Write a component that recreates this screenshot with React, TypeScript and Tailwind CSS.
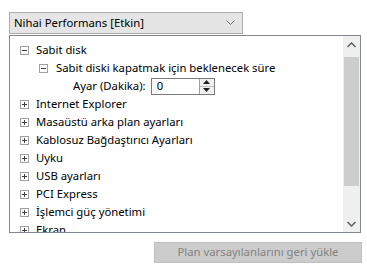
import React from "react";

const font = { fontFamily: '"Noto Sans", "Segoe UI", sans-serif' };

function Box({ open }: { open: boolean }) {
  return (
    <svg width="9" height="9" viewBox="0 0 9 9" className="shrink-0">
      <rect x="0.5" y="0.5" width="8" height="8" fill="#fff" stroke="#a0a0a0" />
      <line x1="2" y1="4.5" x2="7" y2="4.5" stroke="#404040" />
      {!open && <line x1="4.5" y1="2" x2="4.5" y2="7" stroke="#404040" />}
    </svg>
  );
}

function Row({ label, open = false, level = 0 }: { label: string; open?: boolean; level?: number }) {
  return (
    <div className={`flex h-[18px] items-center ${level === 0 ? "pl-[10px]" : "pl-[29px]"}`}>
      <Box open={open} />
      <span className={`${level === 0 ? "ml-[7px]" : "ml-[8px]"} whitespace-nowrap`}>{label}</span>
    </div>
  );
}

export default function App() {
  return (
    <div className="w-[367px] h-[270px] bg-white pl-[9px] pt-[12px] text-[11.3px] text-[#000]" style={font}>
      <div className="w-[234px] h-[22px] border border-[#adadad] bg-[#e5e5e5] flex items-center pl-[4px] pr-[4px]">
        <span className="flex-1 leading-none">Nihai Performans [Etkin]</span>
        <svg width="9" height="6" viewBox="0 0 9 6" className="mr-[3px]">
          <path d="M0.5 0.5 L4.5 4.5 L8.5 0.5" fill="none" stroke="#707070" strokeWidth="1" />
        </svg>
      </div>
      <div className="mt-[1px] w-[352px] h-[198px] border border-[#828790] flex overflow-hidden">
        <div className="flex-1 pt-[5px] overflow-hidden">
          <Row label="Sabit disk" open />
          <Row label="Sabit diski kapatmak için beklenecek süre" open level={1} />
          <div className="flex h-[18px] items-center pl-[63px]">
            <span className="whitespace-nowrap">Ayar (Dakika):</span>
            <div className="ml-[5px] flex h-[17px] border border-[#7a7a7a]">
              <div className="w-[47px] pl-[5px] flex items-center bg-white">0</div>
              <div className="w-[15px] border-l border-[#a0a0a0] flex flex-col bg-[#f0f0f0]">
                <div className="flex-1 flex items-center justify-center border-b border-[#c0c0c0]">
                  <svg width="7" height="4" viewBox="0 0 7 4"><path d="M0 4 L3.5 0 L7 4 Z" fill="#202020" /></svg>
                </div>
                <div className="flex-1 flex items-center justify-center">
                  <svg width="7" height="4" viewBox="0 0 7 4"><path d="M0 0 L3.5 4 L7 0 Z" fill="#202020" /></svg>
                </div>
              </div>
            </div>
          </div>
          <Row label="Internet Explorer" />
          <Row label="Masaüstü arka plan ayarları" />
          <Row label="Kablosuz Bağdaştırıcı Ayarları" />
          <Row label="Uyku" />
          <Row label="USB ayarları" />
          <Row label="PCI Express" />
          <Row label="İşlemci güç yönetimi" />
          <Row label="Ekran" />
        </div>
        <div className="w-[17px] bg-[#f0f0f0] flex flex-col">
          <div className="h-[17px] flex items-center justify-center">
            <svg width="9" height="6" viewBox="0 0 9 6"><path d="M0.5 5 L4.5 1 L8.5 5" fill="none" stroke="#606060" strokeWidth="1.5" /></svg>
          </div>
          <div className="h-[4px]" />
          <div className="mx-[1px] h-[129px] bg-[#cdcdcd]" />
          <div className="flex-1" />
          <div className="h-[17px] flex items-center justify-center">
            <svg width="9" height="6" viewBox="0 0 9 6"><path d="M0.5 1 L4.5 5 L8.5 1" fill="none" stroke="#606060" strokeWidth="1.5" /></svg>
          </div>
        </div>
      </div>
      <div className="mt-[9px] ml-[145px] w-[208px] h-[21px] border border-[#bfbfbf] bg-[#cccccc] flex items-center justify-center text-[#838383]">
        Plan varsayılanlarını geri yükle
      </div>
    </div>
  );
}
